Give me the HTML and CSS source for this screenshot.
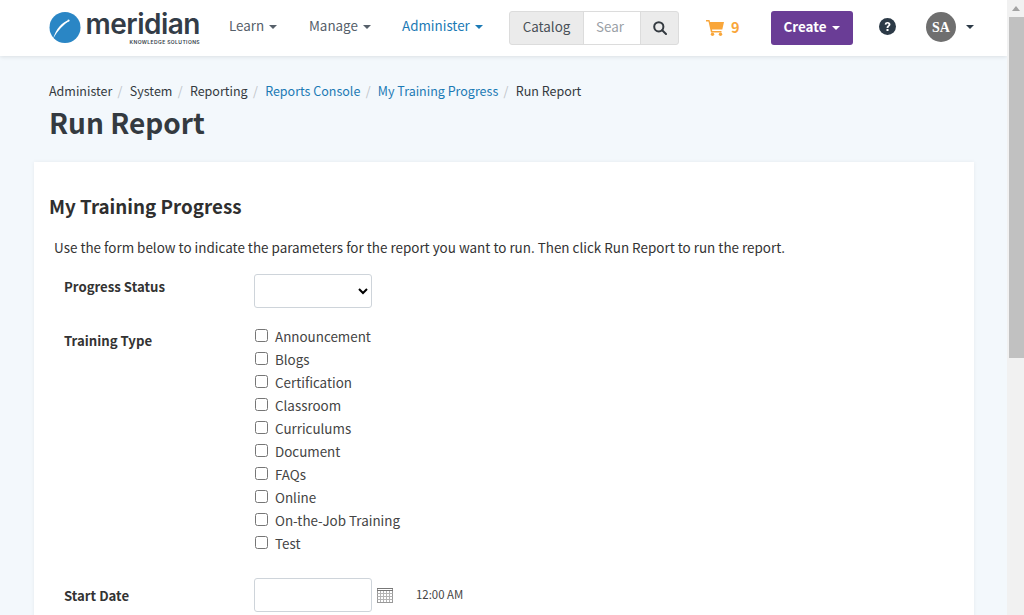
FILE: index.html
```html
<!DOCTYPE html>
<html>

<head>
	<title>Run Report</title>
	<link rel="stylesheet" href="styles.css">
</head>

<body>
	<div class="scrollbar">
		<div class="scroll-up"></div>
		<div class="scroll-thumb"></div>
	</div>

	<header class="topbar">
		<a class="logo">
			<svg class="logo-mark" width="32" height="32" viewBox="0 0 32 32">
				<circle cx="16" cy="15.500" r="15.500" fill="#2a86c5" />
				<path d="M4 27 C7 17 13 10 20 8 L20.500 9 C15 12 9 18 4 27 Z" fill="#fff" />
				<circle cx="19.500" cy="8.500" r="1" fill="#fff" />
			</svg>
			<span class="logo-text">
				<span class="logo-name">meridian</span>
				<span class="logo-sub">KNOWLEDGE SOLUTIONS</span>
			</span>
		</a>
		<nav class="mainnav">
			<a class="navlink navlink-learn">Learn <i class="caret"></i></a>
			<a class="navlink navlink-manage">Manage <i class="caret"></i></a>
			<a class="navlink navlink-admin">Administer <i class="caret"></i></a>
		</nav>
		<div class="search">
			<span class="search-scope">Catalog</span>
			<input class="search-input" type="text" placeholder="Sear">
			<span class="search-btn">
				<svg width="14" height="14" viewBox="0 0 14 14" fill="none" stroke="#343a40" stroke-width="2">
					<circle cx="5.800" cy="5.800" r="4.600" />
					<path d="M9.200 9.200 L13 13" stroke-linecap="round" />
				</svg>
			</span>
		</div>
		<a class="cart">
			<svg width="18" height="16" viewBox="0 0 18 16" fill="#f9a63a">
				<path d="M0 0 H3.500 L4 2 H18 L16.300 9.500 H6 L6.300 11 H15.500 V12.500 H5 L2.500 1.500 H0 Z" />
				<circle cx="6.500" cy="14.300" r="1.700" />
				<circle cx="14.500" cy="14.300" r="1.700" />
			</svg>
			<span class="cart-count">9</span>
		</a>
		<button class="create">Create <i class="caret"></i></button>
		<svg class="help" width="17" height="17" viewBox="0 0 17 17">
			<circle cx="8.500" cy="8.500" r="8.500" fill="#2c3a47" />
			<path d="M5.700 6.500 C5.800 4.800 7 4 8.600 4 C10.300 4 11.500 5 11.500 6.400 C11.500 8.300 9.400 8.200 9.400 10 H7.600 C7.600 7.600 9.500 7.700 9.500 6.500 C9.500 5.900 9.100 5.600 8.500 5.600 C7.900 5.600 7.500 6 7.400 6.700 Z" fill="#fff" />
			<rect x="7.500" y="11" width="2" height="2" fill="#fff" />
		</svg>
		<span class="avatar">SA</span>
		<i class="caret caret-user"></i>
	</header>

	<main class="page">
		<ol class="crumbs">
			<li>Administer</li>
			<li>System</li>
			<li>Reporting</li>
			<li class="crumb-link">Reports Console</li>
			<li class="crumb-link">My Training Progress</li>
			<li>Run Report</li>
		</ol>
		<h1 class="page-title">Run Report</h1>

		<section class="card">
			<h2 class="card-title">My Training Progress</h2>
			<p class="intro">Use the form below to indicate the parameters for the report you want to run. Then click Run Report to run the report.</p>

			<div class="field field-status">
				<label class="field-label">Progress Status</label>
				<select class="control"><option></option></select>
			</div>

			<div class="field field-type">
				<label class="field-label">Training Type</label>
				<div class="checks">
					<label class="check"><input type="checkbox"><span>Announcement</span></label>
					<label class="check"><input type="checkbox"><span>Blogs</span></label>
					<label class="check"><input type="checkbox"><span>Certification</span></label>
					<label class="check"><input type="checkbox"><span>Classroom</span></label>
					<label class="check"><input type="checkbox"><span>Curriculums</span></label>
					<label class="check"><input type="checkbox"><span>Document</span></label>
					<label class="check"><input type="checkbox"><span>FAQs</span></label>
					<label class="check"><input type="checkbox"><span>Online</span></label>
					<label class="check"><input type="checkbox"><span>On-the-Job Training</span></label>
					<label class="check"><input type="checkbox"><span>Test</span></label>
				</div>
			</div>

			<div class="field field-date">
				<label class="field-label">Start Date</label>
				<div class="date">
					<input class="control" type="text">
					<svg class="cal" width="16" height="16" viewBox="0 0 16 16" fill="none">
						<rect x="0.500" y="1.500" width="15" height="14" fill="#fff" stroke="#999" />
						<path d="M0 1.500 H16 M0 3.500 H16" stroke="#777" />
						<path d="M0.500 6.500 H15.500 M0.500 9.500 H15.500 M0.500 12.500 H15.500 M3.500 4 V15 M6.500 4 V15 M9.500 4 V15 M12.500 4 V15" stroke="#b4b4b4" />
					</svg>
					<span class="time">12:00 AM</span>
				</div>
			</div>
		</section>
	</main>
</body>

</html>
```

FILE: styles.css
```css
:root {
	--ink: #343a40;
	--link: #1b7ab5;
	--border: #ced4da;
	--page-bg: #f3f8fc;
}

html {
	overflow: hidden;
}

body {
	height: 615px;
	margin: 0 17px 0 0;
	overflow: hidden;
	background-color: var(--page-bg);
	color: var(--ink);
	font-family: "Noto Sans CJK SC", "Open Sans", sans-serif;
	font-size: 13.4px;
	line-height: 23px;
}

.scrollbar {
	position: fixed;
	top: 0;
	right: 0;
	bottom: 0;
	width: 17px;
	background-color: #f1f1f1;
}

.scroll-up {
	width: 0;
	height: 0;
	margin: 6px auto 6px;
	border-bottom: 5px solid #a3a3a3;
	border-left: 4px solid transparent;
	border-right: 4px solid transparent;
}

.scroll-thumb {
	height: 341px;
	margin-left: 2px;
	background-color: #c1c1c1;
}

.topbar {
	position: relative;
	display: flex;
	align-items: center;
	height: 56px;
	padding-left: 49px;
	background-color: #fff;
	box-shadow: 0 1px 4px rgba(0, 0, 0, 0.1);
}

.logo {
	display: flex;
	align-items: center;
	width: 180px;
	flex-shrink: 0;
}

.logo-mark {
	flex-shrink: 0;
	margin-right: 5px;
}

.logo-text {
	display: flex;
	flex-direction: column;
	align-items: flex-end;
	width: 114px;
}

.logo-name {
	font-family: Inter, sans-serif;
	font-size: 28px;
	font-weight: 600;
	line-height: 26px;
	letter-spacing: -0.5px;
	color: #333c47;
}

.logo-sub {
	margin-top: 2px;
	font-family: Inter, sans-serif;
	font-size: 5px;
	font-weight: 600;
	line-height: 7px;
	letter-spacing: 0.4px;
	color: #333c47;
}

.mainnav {
	display: flex;
	width: 280px;
	padding-bottom: 5px;
	flex-shrink: 0;
}

.navlink {
	white-space: nowrap;
	color: #56606a;
}

.navlink-learn {
	width: 80px;
}

.navlink-manage {
	width: 93px;
}

.navlink-admin {
	color: var(--link);
}

.caret {
	display: inline-block;
	width: 0;
	height: 0;
	margin-left: 2px;
	vertical-align: 2px;
	border-top: 4px solid currentColor;
	border-left: 4px solid transparent;
	border-right: 4px solid transparent;
}

.search {
	display: flex;
	width: 170px;
	height: 34px;
	flex-shrink: 0;
	box-sizing: border-box;
	border: 1px solid #dcdcdc;
	border-radius: 3px;
	background-color: #ebebeb;
}

.search-scope {
	width: 73px;
	text-align: center;
	line-height: 28px;
	color: #495057;
}

.search-input {
	width: 58px;
	box-sizing: border-box;
	border: 1px solid #dcdcdc;
	border-width: 0 1px;
	padding: 0 12px 4px;
	background-color: #fff;
	font: inherit;
	outline: none;
}

.search-input::placeholder {
	color: #9aa0a6;
}

.search-btn {
	display: flex;
	flex: 1;
	align-items: center;
	justify-content: center;
}

.cart {
	display: flex;
	align-items: center;
	gap: 7px;
	width: 65px;
	margin-left: 27px;
	flex-shrink: 0;
	font-size: 14.500px;
	font-weight: 700;
	color: #f9a63a;
}

.cart-count {
	padding-bottom: 4px;
}

.create {
	width: 82px;
	height: 34px;
	padding: 0 0 4px;
	flex-shrink: 0;
	border: none;
	border-radius: 3px;
	background-color: #6a3d96;
	color: #fff;
	font: inherit;
	font-weight: 700;
}

.create .caret {
	margin-left: 3px;
}

.help {
	margin: 0 0 3px 26px;
	flex-shrink: 0;
}

.avatar {
	display: flex;
	align-items: center;
	justify-content: center;
	width: 30px;
	height: 30px;
	margin: 0 0 2px 30px;
	flex-shrink: 0;
	border-radius: 50%;
	background-color: #6f6f6f;
	color: #fff;
	font-family: "Liberation Serif", serif;
	font-size: 14px;
	font-weight: 700;
}

.caret-user {
	margin: 0 0 3px 10px;
	color: #2c3a47;
}

.page {
	padding: 24px 33px 0 34px;
}

.crumbs {
	display: flex;
	margin: 0;
	padding: 0 0 0 15px;
	list-style: none;
	font-size: 12.500px;
	line-height: 22px;
}

.crumbs li + li::before {
	content: "/";
	padding: 0 7.300px 0 5.300px;
	color: #bfc4c9;
}

.crumb-link {
	color: var(--link);
}

.page-title {
	margin: 0 0 20px 15px;
	font-size: 28px;
	font-weight: 700;
	line-height: 40px;
}

.card {
	height: 900px;
	padding: 31px 15px 0;
	background-color: #fff;
	box-shadow: 0 0 4px rgba(0, 0, 0, 0.06);
}

.card-title {
	margin: 0;
	font-size: 18.800px;
	font-weight: 700;
	line-height: 26px;
	color: #2f2f2f;
}

.intro {
	margin: 17px 0 15px 5px;
	font-size: 13.440px;
	color: #333;
}

.field {
	display: grid;
	grid-template-columns: 190px 1fr;
	padding-left: 15px;
}

.field-label {
	font-size: 13.200px;
	font-weight: 700;
	color: #333;
}

.field-status {
	margin-bottom: 18px;
}

.field-status .field-label {
	padding-top: 1px;
}

.field-type {
	margin-bottom: 22px;
}

.field-type .field-label {
	padding-top: 3px;
}

.control {
	display: block;
	width: 118px;
	height: 34px;
	box-sizing: border-box;
	border: 1px solid var(--border);
	border-radius: 3px;
	background-color: #fff;
	font: inherit;
}

.checks {
	display: flex;
	flex-direction: column;
}

.check {
	display: flex;
	align-items: center;
	height: 23px;
}

.check input {
	position: relative;
	top: -2px;
	width: 13px;
	height: 13px;
	margin: 0 7px 0 1px;
}

.check span {
	position: relative;
	top: -1px;
	color: #444;
}

.date {
	display: flex;
	align-items: center;
}

.cal {
	margin-left: 5px;
	flex-shrink: 0;
}

.time {
	margin-left: 23px;
	padding-bottom: 2px;
	font-size: 11.400px;
	color: #444;
}

.field-date .field-label {
	padding-top: 6px;
}
```
